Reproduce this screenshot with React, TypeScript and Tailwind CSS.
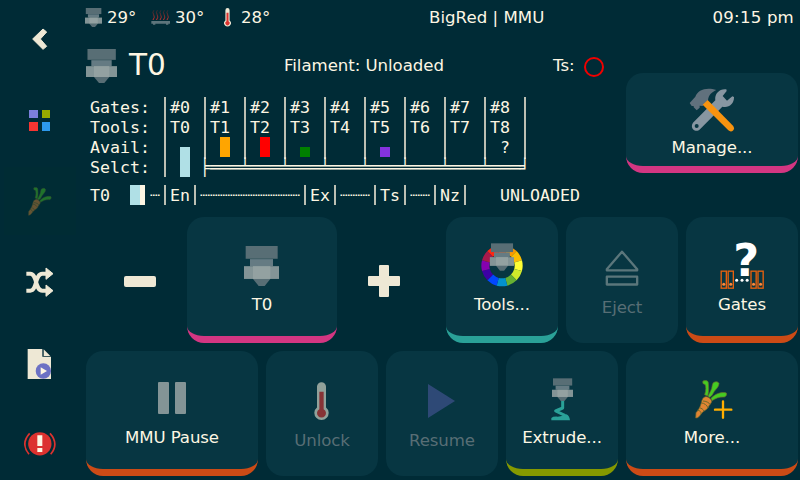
import type { ReactNode } from "react";

function Nozzle() {
  return (
    <g>
      <rect x="5" y="0" width="96" height="38" fill="#586e75" />
      <rect x="18" y="39" width="69" height="21" fill="#657b83" />
      <rect x="0" y="60" width="105" height="38" fill="#839496" />
      <rect x="27" y="60" width="52" height="38" fill="#93a1a1" />
      <path d="M27 98H79L62 119H44Z" fill="#586e75" />
    </g>
  );
}

function NozzleIcon({ w, h }: { w: number; h: number }) {
  return (
    <svg width={w} height={h} viewBox="0 0 105 119" preserveAspectRatio="none">
      <Nozzle />
    </svg>
  );
}

function BedIcon() {
  return (
    <svg width="19" height="16" viewBox="453 25 57 48">
      <defs>
        <linearGradient id="heat" x1="0" y1="28" x2="0" y2="60" gradientUnits="userSpaceOnUse">
          <stop offset="0" stopColor="#a5281f" stopOpacity="0.25" />
          <stop offset="1" stopColor="#dc322f" />
        </linearGradient>
      </defs>
      <g fill="none" stroke="url(#heat)" strokeWidth="3">
        {[0, 10.5, 21, 31.5, 42].map((x) => (
          <path key={x} d={`M${462 + x} 28q-6 7-1 14t-2 16`} />
        ))}
      </g>
      <path d="M454 61H510V69H505V72H498V69H466V72H459V69H454Z" fill="#5d747b" />
    </svg>
  );
}

function Thermometer({ w, h }: { w: number; h: number }) {
  return (
    <svg width={w} height={h} viewBox="702 125 45 119" preserveAspectRatio="none">
      <path d="M711 139a13.500 13.500 0 0 1 27 0V203a21.500 21.500 0 1 1-27 0Z" fill="#eee8d5" />
      <path d="M718 155H731V208a13.500 13.500 0 1 1-13 0Z" fill="#dc322f" />
    </svg>
  );
}

function Carrot() {
  return (
    <g stroke="#6d6b2c" strokeWidth="2">
      <path d="M249 122C256 120 264 120 265 127C266 141 267 154 263 167L254 163C259 150 258 138 255 132C249 133 247 126 249 122Z" fill="#45cc22" />
      <path d="M280 127C286 123 294 123 297 129C297 140 288 146 283 153C278 162 275 169 268 171L264 167C270 156 276 145 276 139C277 133 278 130 280 127Z" fill="#45cc22" />
      <path d="M299 158C307 156 314 156 319 158C321 163 319 168 313 170C298 169 287 174 276 181L273 174C282 165 290 160 299 158Z" fill="#45cc22" />
      <path d="M227 233L228 217C234 211 240 202 244 188C246 176 250 170 257 169C265 168 275 177 275 184C273 191 267 193 265 201C261 209 249 212 244 220C239 227 234 234 227 233Z" fill="#e08433" />
      <path d="M245 188C252 188 262 195 264 203M249 182C257 182 268 187 270 192M233 209C240 211 245 216 243 221M239 202C244 204 250 207 252 212" fill="none" strokeWidth="3" />
    </g>
  );
}

function ManageIcon() {
  return (
    <svg width="46" height="44" viewBox="207 143 138 132" className="mt-[3px]">
      <path d="M219 247L286 180C283 162 297 144 319 147L320 152L308 167L321 181L337 168L342 170C343 191 326 204 307 199L240 267C226 280 208 262 219 247Z" fill="#8796a1" />
      <circle cx="230" cy="257" r="6" fill="#073642" />
      <path d="M209 188L226 169C233 148 260 139 289 149C276 155 266 163 264 180L248 197L239 196L239 202L230 210L221 201V197L215 197Z" fill="#61717d" />
      <path d="M263 179L339 256C348 267 335 279 325 270L248 193Z" fill="#f8930f" />
    </svg>
  );
}

const wheel = ["#fd5308", "#fb9902", "#fabc02", "#fefe33", "#d0ea2b", "#66b032", "#0391ce", "#0247fe", "#3d01a4", "#8601af", "#a7194b", "#fe2712"];

function WheelIcon() {
  const at = (deg: number, r: number) => {
    const a = ((deg - 90) * Math.PI) / 180;
    return `${214.5 + r * Math.cos(a)} ${166 + r * Math.sin(a)}`;
  };
  return (
    <svg width="42" height="44" viewBox="151.500 98 126 132">
      {wheel.map((color, i) => {
        const s = i * 30 - 15;
        return (
          <path key={color} fill={color} d={`M${at(s, 62)}A62 62 0 0 1 ${at(s + 30, 62)}L${at(s + 30, 38)}A38 38 0 0 0 ${at(s, 38)}Z`} />
        );
      })}
      <g transform="translate(178 99) scale(0.690)">
        <Nozzle />
      </g>
    </svg>
  );
}

function GatesIcon() {
  return (
    <svg width="44" height="46" viewBox="118 97 132 138" className="mt-px overflow-visible">
      <text x="196.500" y="197" textAnchor="middle" fontSize="134" fontWeight="bold" fill="#ffffff" className="font-['DejaVu_Sans',sans-serif]">?</text>
      {[121.5, 142.5, 211, 232].map((x) => (
        <g key={x}>
          <rect x={x} y="181.500" width="15.500" height="51" fill="none" stroke="#e8600c" strokeWidth="4" />
          <circle cx={x + 7.75} cy="221" r="4.500" fill="#ff8a3c" />
        </g>
      ))}
      {[168, 184, 199.5].map((x) => (
        <circle key={x} cx={x} cy="209" r="4.500" fill="#ffffff" />
      ))}
    </svg>
  );
}

function EjectIcon() {
  return (
    <svg width="34" height="36" viewBox="521 121 102 108">
      <g fill="none" stroke="#93a1a1" strokeWidth="7" strokeLinejoin="round">
        <path d="M572 126L526.500 179V182H617.500V179Z" />
        <rect x="526.500" y="201" width="91" height="23.500" />
      </g>
    </svg>
  );
}

function ExtrudeIcon() {
  return (
    <svg width="22" height="43" viewBox="510 113 66 129" className="mt-1">
      <path d="M545 178V203L524 212L553 226" fill="none" stroke="#2aa198" strokeWidth="9" strokeLinejoin="round" />
      <path d="M511 240V233Q516 228 530 229Q548 228 556 222Q565 225 567 240Z" fill="#2aa198" />
      <g transform="translate(513 114) scale(0.600 0.570)">
        <Nozzle />
      </g>
    </svg>
  );
}

type CardProps = { label: string; accent?: string; size: string; disabled?: boolean; children: ReactNode };

function Card({ label, accent = "", size, disabled = false, children }: CardProps) {
  return (
    <button className={`flex shrink-0 flex-col items-center justify-center gap-[7px] rounded-[17px] bg-[#073642] pr-px ${size} ${accent && `border-b-[7px] ${accent}`}`}>
      <span className={`flex h-[46px] items-center justify-center ${disabled ? "opacity-60" : ""}`}>{children}</span>
      <span className={`pl-px leading-5 tracking-[-0.1px] ${disabled ? "text-[#586e75]" : ""}`}>{label}</span>
    </button>
  );
}

function Side({ children, className = "" }: { children: ReactNode; className?: string }) {
  return <button className={`flex h-[68px] w-[72px] items-center justify-center ${className}`}>{children}</button>;
}

function Sidebar() {
  return (
    <nav className="flex h-[480px] w-20 shrink-0 flex-col items-center justify-between pt-[5px] pb-[2px]">
      <Side>
        <svg width="16" height="22" viewBox="95 85 48 66">
          <path d="M97 118L128 88L139 97L120 118L139 140L128 149Z" fill="#eee8d5" stroke="#eee8d5" strokeWidth="3" strokeLinejoin="round" />
        </svg>
      </Side>
      <Side>
        <span className="grid grid-cols-2 gap-1 pr-px">
          <i className="size-[8.500px] bg-[#7b7fdb]" />
          <i className="size-[8.500px] bg-[#98ab00]" />
          <i className="size-[8.500px] bg-[#f63532]" />
          <i className="size-[8.500px] bg-[#2d99ec]" />
        </span>
      </Side>
      <Side className="bg-[#002c34]">
        <svg width="24" height="29" viewBox="225 119 98 117" preserveAspectRatio="none" className="mr-px opacity-45">
          <Carrot />
        </svg>
      </Side>
      <Side>
        <svg width="28" height="30" viewBox="77 532 84 90">
          <path d="M78 552H90C111 552 103 603 126 603H141M78 603H90C111 603 103 552 126 552H141" fill="none" stroke="#eee8d5" strokeWidth="12" />
          <path d="M137 535L158 552L137 569ZM137 586L158 603L137 620Z" fill="#eee8d5" stroke="#eee8d5" strokeWidth="3" strokeLinejoin="round" />
        </svg>
      </Side>
      <Side>
        <svg width="26" height="32" viewBox="82 53 78 96" className="mt-px">
          <path d="M84 56H128V79H154V146H84Z" fill="#eee8d5" />
          <path d="M132 57L152 77H132Z" fill="#eee8d5" />
          <circle cx="131" cy="122" r="23" fill="#6c71c4" />
          <path d="M123 111L142 122L123 133Z" fill="#fdf6e3" />
        </svg>
      </Side>
      <Side>
        <svg width="32" height="26" viewBox="71 302 96 78">
          <circle cx="118.500" cy="340.500" r="35" fill="#dc322f" />
          <path d="M88 309Q60 340 86 372M149 309Q177 340 151 372" fill="none" stroke="#dc322f" strokeWidth="5" />
          <path d="M111 315H126V347H111ZM111 353H126V365H111Z" fill="#fdf6e3" />
        </svg>
      </Side>
    </nav>
  );
}

/* Monospaced text in which each │ is drawn as a solid rule, one cell wide. */
function Ruled({ text }: { text: string }) {
  return (
    <>
      {text.split(/(│)/).map((part, i) =>
        part === "│" ? <b key={i} className="mx-1 inline-block h-5 w-[2px] bg-[#bcbfb3] align-top" /> : <span key={i}>{part}</span>,
      )}
    </>
  );
}

function Block({ color, half = false }: { color: string; half?: boolean }) {
  return <i className={`inline-block w-[10px] align-top ${half ? "mt-[10px] h-[10px]" : "h-5"} ${color}`} />;
}

function GateMap() {
  return (
    <div className="w-[536px] font-['DejaVu_Sans_Mono',monospace] text-[16.610px] leading-[22px] whitespace-pre">
      <div className="h-5"><Ruled text="Gates: │#0 │#1 │#2 │#3 │#4 │#5 │#6 │#7 │#8 │" /></div>
      <div className="h-5"><Ruled text="Tools: │T0 │T1 │T2 │T3 │T4 │T5 │T6 │T7 │T8 │" /></div>
      <div className="h-5 [&_b]:h-[22px]">
        <Ruled text="Avail: │ " /><Block color="bg-[#b0e0e6]" half />
        <Ruled text=" │ " /><Block color="bg-[#ffa500]" />
        <Ruled text=" │ " /><Block color="bg-[#ff0000]" />
        <Ruled text=" │ " /><Block color="bg-[#008000]" half />
        <Ruled text=" │   │ " /><Block color="bg-[#8533de]" half />
        <Ruled text=" │   │   │ ? │" />
      </div>
      <div className="h-5">
        <Ruled text="Selct: │ " /><Block color="bg-[#b0e0e6]" />
        <Ruled text=" ╞═══╧═══╧═══╧═══╧═══╧═══╧═══╧═══╛" />
      </div>
      <div className="mt-2 h-5">
        <Ruled text="T0  " /><Block color="bg-[#b0e0e6]" />
        <i className="mr-[5px] inline-block h-5 w-[5px] bg-[#fdf6e3] align-top" />
        <Ruled text="┈│En│┈┈┈┈┈┈┈┈┈┈│Ex│┈┈┈│Ts│┈┈│Nz│   UNLOADED" />
      </div>
    </div>
  );
}

export default function App() {
  return (
    <div className="flex h-[480px] w-[800px] overflow-hidden bg-[#002b36] font-['DejaVu_Sans',sans-serif] text-[16.600px] text-[#fdf6e3]">
      <Sidebar />
      <main className="flex w-[720px] flex-col">
        <header className="flex h-[34px] items-center pr-[6px] pl-[5px] leading-5">
          <NozzleIcon w={17} h={19} />
          <span className="ml-[5px] w-11 pt-0.5">29°</span>
          <BedIcon />
          <span className="ml-[5px] w-[49px] pt-0.5">30°</span>
          <Thermometer w={7} h={19} />
          <span className="ml-[10px] w-[188px] pt-0.5">28°</span>
          <span className="pt-0.5 tracking-[0.030px]">BigRed | MMU</span>
          <span className="ml-auto pt-0.5 tracking-[0.200px]">09:15 pm</span>
        </header>
        <div className="flex h-[183px]">
          <section className="w-[546px] shrink-0">
            <div className="flex h-[63px] items-center pl-[6px]">
              <NozzleIcon w={31} h={34} />
              <span className="ml-3 w-[155px] text-[29.500px]">T0</span>
              <span className="w-[269px] pt-0.5 tracking-[-0.05px]">Filament: Unloaded</span>
              <span className="pt-0.5">Ts:</span>
              <span className="mt-[2px] ml-[9px] size-5 rounded-full border-2 border-[#f00000]" />
            </div>
            <div className="pl-[10px]">
              <GateMap />
            </div>
          </section>
          <div className="pt-[39px]">
            <Card label="Manage..." size="h-[100px] w-[172px] pt-1" accent="border-[#d33682]"><ManageIcon /></Card>
          </div>
        </div>
        <div className="flex h-[126px] items-center pl-[6px]">
          <button className="flex w-[101px] items-center justify-center pt-[2px] pl-[7px]">
            <i className="h-[11px] w-8 rounded-[2px] bg-[#eee8d5]" />
          </button>
          <Card label="T0" size="h-[126px] w-[150px] pt-1" accent="border-[#d33682]">
            <span className="pt-[2px]"><NozzleIcon w={35} h={40} /></span>
          </Card>
          <button className="flex w-[109px] items-center justify-center pt-[2px] pr-[15px]">
            <svg width="32" height="32" viewBox="0 0 32 32">
              <path d="M12 0H20Q21 0 21 1V11H31Q32 11 32 12V20Q32 21 31 21H21V31Q21 32 20 32H12Q11 32 11 31V21H1Q0 21 0 20V12Q0 11 1 11H11V1Q11 0 12 0Z" fill="#eee8d5" />
            </svg>
          </button>
          <div className="flex gap-2">
            <Card label="Tools..." size="h-[126px] w-[112px] pt-1" accent="border-[#2aa198]"><WheelIcon /></Card>
            <Card label="Eject" size="h-[126px] w-[112px] pt-[3px]" disabled><EjectIcon /></Card>
            <Card label="Gates" size="h-[126px] w-[112px] pt-1" accent="border-[#cb4b16]"><GatesIcon /></Card>
          </div>
        </div>
        <div className="mt-2 flex gap-2 pl-[6px]">
          <Card label="MMU Pause" size="h-[125px] w-[172px] pt-[2px]" accent="border-[#cb4b16]">
            <span className="flex gap-[6px]">
              <i className="h-8 w-[11px] rounded-[1px] bg-[#839496]" />
              <i className="h-8 w-[11px] rounded-[1px] bg-[#839496]" />
            </span>
          </Card>
          <Card label="Unlock" size="h-[125px] w-[112px] pt-[2px]" disabled><Thermometer w={15} h={39} /></Card>
          <Card label="Resume" size="h-[125px] w-[112px] pt-[2px]" disabled>
            <svg width="27" height="34" viewBox="0 0 27 34" className="opacity-80"><path d="M0 0L27 17L0 34Z" fill="#5a5fb0" /></svg>
          </Card>
          <Card label="Extrude..." size="h-[125px] w-[112px] pt-[2px]" accent="border-[#859900]"><ExtrudeIcon /></Card>
          <Card label="More..." size="h-[125px] w-[172px] pt-[2px]" accent="border-[#cb4b16]">
            <svg width="38" height="39" viewBox="225 119 114 117" className="mt-[3px] ml-1">
              <Carrot />
              <path d="M309 183V232M285 208H334" fill="none" stroke="#ffae00" strokeWidth="7" strokeLinecap="round" />
            </svg>
          </Card>
        </div>
      </main>
    </div>
  );
}
